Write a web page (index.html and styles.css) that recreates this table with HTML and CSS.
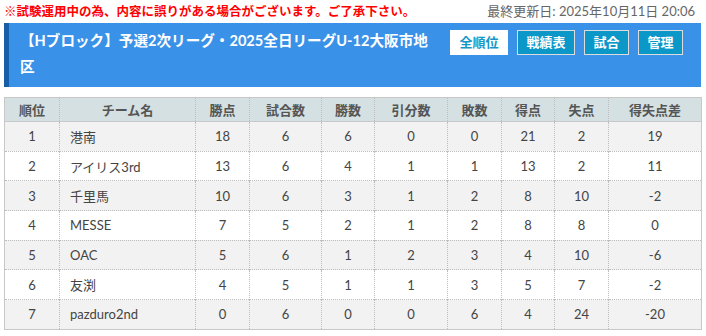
FILE: index.html
```html
<!DOCTYPE html>
<html lang="ja">
<head>
<meta charset="utf-8">
<link rel="stylesheet" href="styles.css">
</head>
<body>
<div class="page">
  <div class="notice">
    <span class="warn">※試験運用中の為、内容に誤りがある場合がございます。ご了承下さい。</span>
    <span class="updated">最終更新日: 2025年10月11日 20:06</span>
  </div>
  <div class="banner">
    <h1 class="title">【Hブロック】予選2次リーグ・2025全日リーグU-12大阪市地区</h1>
    <nav class="tabs">
      <a class="tab active">全順位</a>
      <a class="tab">戦績表</a>
      <a class="tab">試合</a>
      <a class="tab">管理</a>
    </nav>
  </div>
  <table class="standings">
    <thead>
      <tr>
        <th class="c-rank">順位</th>
        <th class="c-team">チーム名</th>
        <th class="c-pts">勝点</th>
        <th class="c-gp">試合数</th>
        <th class="c-w">勝数</th>
        <th class="c-d">引分数</th>
        <th class="c-l">敗数</th>
        <th class="c-gf">得点</th>
        <th class="c-ga">失点</th>
        <th class="c-gd">得失点差</th>
      </tr>
    </thead>
    <tbody>
      <tr><td>1</td><td class="team">港南</td><td>18</td><td>6</td><td>6</td><td>0</td><td>0</td><td>21</td><td>2</td><td>19</td></tr>
      <tr><td>2</td><td class="team">アイリス3rd</td><td>13</td><td>6</td><td>4</td><td>1</td><td>1</td><td>13</td><td>2</td><td>11</td></tr>
      <tr><td>3</td><td class="team">千里馬</td><td>10</td><td>6</td><td>3</td><td>1</td><td>2</td><td>8</td><td>10</td><td>-2</td></tr>
      <tr><td>4</td><td class="team">MESSE</td><td>7</td><td>5</td><td>2</td><td>1</td><td>2</td><td>8</td><td>8</td><td>0</td></tr>
      <tr><td>5</td><td class="team">OAC</td><td>5</td><td>6</td><td>1</td><td>2</td><td>3</td><td>4</td><td>10</td><td>-6</td></tr>
      <tr><td>6</td><td class="team">友渕</td><td>4</td><td>5</td><td>1</td><td>1</td><td>3</td><td>5</td><td>7</td><td>-2</td></tr>
      <tr><td>7</td><td class="team">pazduro2nd</td><td>0</td><td>6</td><td>0</td><td>0</td><td>6</td><td>4</td><td>24</td><td>-20</td></tr>
    </tbody>
  </table>
</div>
</body>
</html>
```
FILE: styles.css
```css
* { box-sizing: border-box; }
html, body { margin: 0; padding: 0; background: #fff; }
body {
  font-family: Lato, "Noto Sans CJK JP", sans-serif;
  color: #444;
}
.page { padding: 0 5px 0 4px; }

.notice {
  display: flex;
  justify-content: space-between;
  align-items: center;
  height: 23px;
  padding-bottom: 3px;
  padding-right: 6px;
}
.warn {
  color: #f00;
  font-size: 12.5px;
  font-weight: bold;
}
.updated {
  color: #666;
  font-size: 13px;
}

.banner {
  display: flex;
  align-items: flex-start;
  background: #3a91e8;
  border-left: 5px solid #165ea8;
  padding: 5px 18px 7px 11px;
  min-height: 64px;
}
.title {
  flex: 1;
  margin: 0;
  color: #fff;
  font-size: 14.6px;
  font-weight: bold;
  line-height: 26px;
  padding-right: 18px;
}
.tabs {
  display: flex;
  gap: 9px;
  padding-top: 2px;
}
.tab {
  display: block;
  height: 25px;
  line-height: 23px;
  padding: 0 8.5px;
  border: 1px solid #dcdcdc;
  background: #0b97c8;
  color: #fff;
  font-size: 13px;
  font-weight: bold;
  text-decoration: none;
}
.tab.active {
  background: #fff;
  color: #1596c6;
  border-color: #fff;
}

.standings {
  margin-top: 10px;
  width: 697px;
  border-collapse: collapse;
  border: 1px solid #c8c8c8;
  font-size: 13px;
  table-layout: fixed;
}
.standings th {
  background: #d4e0e1;
  color: #555;
  font-weight: bold;
  height: 24px;
  padding: 0;
  border-left: 1px dotted #bdbdbd;
  border-bottom: 1px solid #c8c8c8;
}
.standings td {
  height: 29.7px;
  padding: 0;
  text-align: center;
  color: #444;
  border-left: 1px dotted #bdbdbd;
  border-top: 1px dotted #bdbdbd;
}
.standings tbody tr:nth-child(odd) td { background: #f2f2f2; }
.standings tbody tr:nth-child(even) td { background: #fff; }
.standings td.team { text-align: left; padding-left: 10px; }

.c-rank { width: 55px; }
.c-team { width: 136px; }
.c-pts { width: 54px; }
.c-gp { width: 72px; }
.c-w { width: 53px; }
.c-d { width: 73px; }
.c-l { width: 54px; }
.c-gf { width: 53px; }
.c-ga { width: 54px; }
.c-gd { width: 93px; }
```
